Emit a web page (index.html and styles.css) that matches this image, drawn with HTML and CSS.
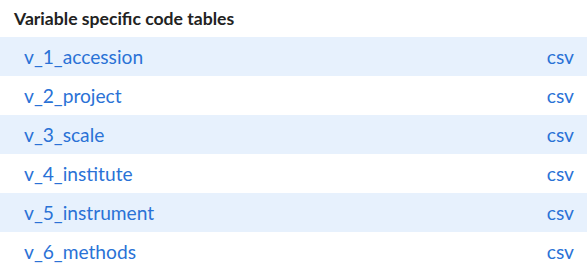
FILE: index.html
```html
<!DOCTYPE html>
<html>
<head>
<meta charset="utf-8">
<link rel="stylesheet" href="styles.css">
</head>
<body>
<div class="panel">
  <h2 class="title">Variable specific code tables</h2>
  <ul class="list">
    <li class="row"><a class="name">v_1_accession</a><a class="fmt">csv</a></li>
    <li class="row"><a class="name">v_2_project</a><a class="fmt">csv</a></li>
    <li class="row"><a class="name">v_3_scale</a><a class="fmt">csv</a></li>
    <li class="row"><a class="name">v_4_institute</a><a class="fmt">csv</a></li>
    <li class="row"><a class="name">v_5_instrument</a><a class="fmt">csv</a></li>
    <li class="row"><a class="name">v_6_methods</a><a class="fmt">csv</a></li>
  </ul>
</div>
</body>
</html>
```
FILE: styles.css
```css
html, body { margin: 0; padding: 0; background: #fff; }
.panel { font-family: "Lato", "Liberation Sans", sans-serif; }
.title {
  margin: 0;
  height: 37px;
  padding-left: 14px;
  padding-bottom: 1px;
  box-sizing: border-box;
  display: flex;
  align-items: center;
  font-size: 17.6px;
  font-weight: 700;
  color: #222;
}
.list { list-style: none; margin: 0; padding: 0; }
.row {
  height: 39px;
  display: flex;
  align-items: center;
  justify-content: space-between;
  padding: 0 13px 0 24px;
  font-size: 19.2px;
  color: #2a72d6;
}
.row:nth-child(odd) { background: #e7f1fd; }
```
